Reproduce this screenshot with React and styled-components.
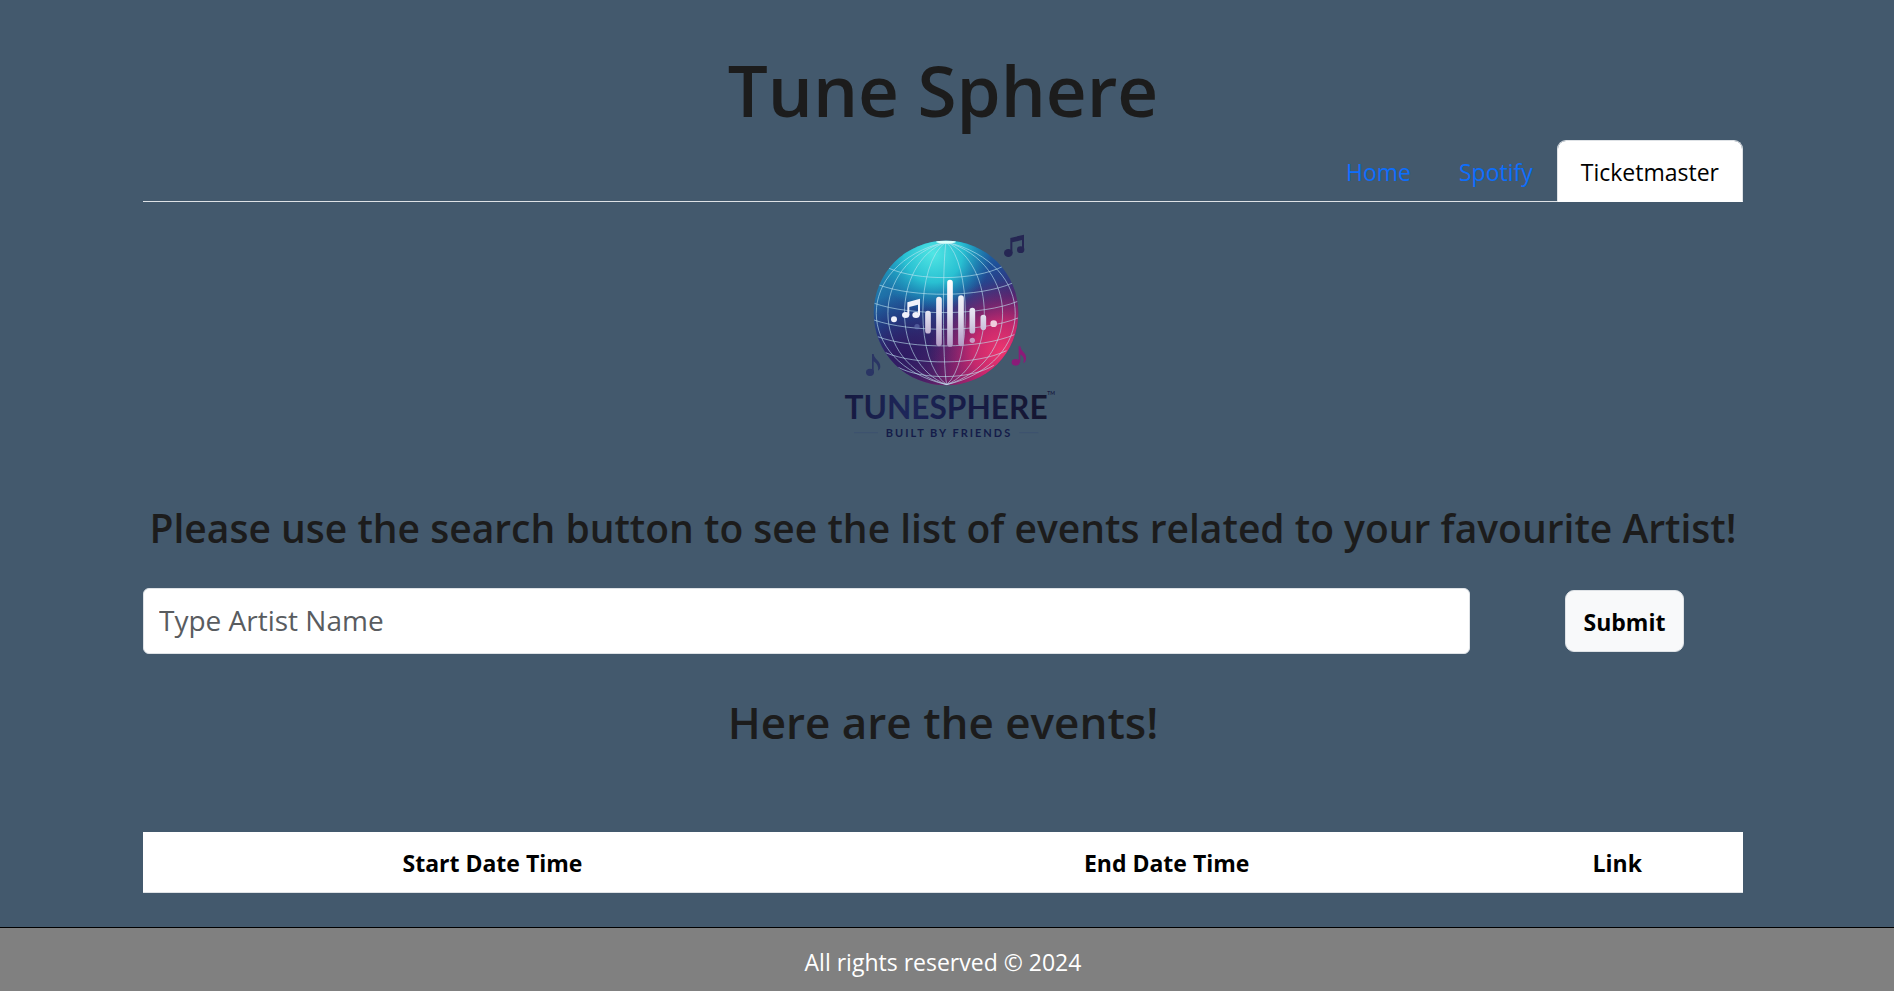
import React from "react";
import styled, { createGlobalStyle } from "styled-components";

const GlobalStyle = createGlobalStyle`
  *, *::before, *::after { box-sizing: border-box; }
  body {
    margin: 0;
    background: #43596d;
    color: #1c1c1c;
    font-family: "Open Sans", "Noto Sans", sans-serif;
    font-size: 23px;
    line-height: 36px;
  }
`;

const Page = styled.div`
  min-height: 100vh;
  display: flex;
  flex-direction: column;
`;

const Main = styled.main`
  flex: 1;
  width: calc(100% - 294px);
  margin-left: 143px;
  padding-top: 42px;
  display: flex;
  flex-direction: column;
`;

const Title = styled.h1`
  margin: 0 0 2px;
  font-size: 71px;
  font-weight: 600;
  line-height: 96px;
  text-align: center;
`;

const Tabs = styled.nav`
  display: flex;
  justify-content: flex-end;
  border-bottom: 1px solid #dee2e6;
`;

const Tab = styled.a`
  padding: 13px 23px 11px;
  margin-bottom: -1px;
  border: 1px solid ${(p) => (p.$active ? "#dee2e6" : "transparent")};
  border-bottom-color: ${(p) => (p.$active ? "#fff" : "transparent")};
  border-radius: 9px 9px 0 0;
  background: ${(p) => (p.$active ? "#fff" : "transparent")};
  background-clip: padding-box;
  color: ${(p) => (p.$active ? "#000" : "#0d6efd")};
  text-decoration: none;
`;

const LogoImage = styled.svg`
  width: 240px;
  height: 230px;
  margin-top: 18px;
  align-self: center;
`;

const Prompt = styled.h2`
  margin: 48px 0 0;
  font-size: 39px;
  font-weight: 600;
  line-height: 60px;
  text-align: center;
  white-space: nowrap;
`;

const SearchForm = styled.form`
  display: flex;
  align-items: center;
  margin-top: 30px;
`;

const ArtistInput = styled.input`
  flex: 1;
  min-width: 0;
  height: 66px;
  padding: 0 15px 2px;
  border: 1px solid #dee2e6;
  border-radius: 6px;
  background: #fff;
  color: #212529;
  font: inherit;
  font-size: 28px;
  &::placeholder { color: #595c5f; opacity: 1; }
`;

const SubmitButton = styled.button`
  height: 62px;
  width: 119px;
  margin: 0 59px 0 95px;
  padding: 2px 0 0;
  border: 1px solid #dee2e6;
  border-radius: 9px;
  background: #f8f9fa;
  color: #000;
  font: inherit;
  font-weight: 700;
`;

const EventsHeading = styled.h2`
  margin: 36px 0 0;
  font-size: 44px;
  font-weight: 600;
  line-height: 64px;
  text-align: center;
`;

const EventsTable = styled.table`
  width: 100%;
  margin-top: 78px;
  border-collapse: collapse;
  background: #fff;
  color: #000;
`;

const HeadCell = styled.th`
  padding: 13px 12px 11px;
  border-bottom: 1px solid #dee2e6;
  font-weight: 700;
`;

const Footer = styled.footer`
  padding: 16px 8px 11px 0;
  border-top: 1px solid #000;
  background: #808080;
  color: #fff;
  text-align: center;
`;

const MERIDIANS = [-210, -175, -125, -70, -8, 58, 115, 170, 208];
const PARALLELS = [145, 195, 250, 300, 350, 398, 442];
const BARS = [
  [294, 273, 340], [327, 231, 378], [360, 180, 380], [393, 226, 378],
  [427, 264, 340], [460, 285, 330],
];

function parallelPath(y) {
  const dy = y - 279;
  const half = Math.sqrt(217 * 217 - dy * dy);
  return `M${348 - half} ${y}C${348 - half * 0.5} ${y + 38} ${348 + half * 0.5} ${y + 38} ${348 + half} ${y - 6}`;
}

function Logo() {
  return (
    <LogoImage viewBox="-21 0 720 690" role="img" aria-label="TuneSphere logo">
      <defs>
        <linearGradient id="base" x1="0.2" y1="0" x2="0.75" y2="1">
          <stop offset="0" stopColor="#1f9fbe" />
          <stop offset="0.4" stopColor="#1f4f98" />
          <stop offset="0.6" stopColor="#3a2a72" />
          <stop offset="1" stopColor="#a01e69" />
        </linearGradient>
        <radialGradient id="teal" gradientUnits="userSpaceOnUse" cx="310" cy="100" r="175">
          <stop offset="0" stopColor="#50e6e4" />
          <stop offset="0.5" stopColor="#29c0d2" />
          <stop offset="1" stopColor="#1698c0" stopOpacity="0" />
        </radialGradient>
        <radialGradient id="pink" gradientUnits="userSpaceOnUse" cx="515" cy="395" r="215">
          <stop offset="0" stopColor="#ee356f" />
          <stop offset="0.4" stopColor="#cf296d" stopOpacity="0.9" />
          <stop offset="1" stopColor="#7d1c6b" stopOpacity="0" />
        </radialGradient>
        <radialGradient id="violet" gradientUnits="userSpaceOnUse" cx="220" cy="410" r="190">
          <stop offset="0" stopColor="#2f1a62" />
          <stop offset="1" stopColor="#281a5c" stopOpacity="0" />
        </radialGradient>
        <linearGradient id="bar" gradientUnits="userSpaceOnUse" x1="0" y1="180" x2="0" y2="380">
          <stop offset="0" stopColor="#fff" />
          <stop offset="0.5" stopColor="#e3e2f0" />
          <stop offset="1" stopColor="#b29ac4" />
        </linearGradient>
        <linearGradient id="word" x1="0" x2="1">
          <stop offset="0" stopColor="#15193f" />
          <stop offset="0.3" stopColor="#1d2659" />
          <stop offset="0.6" stopColor="#161b47" />
          <stop offset="1" stopColor="#15162f" />
        </linearGradient>
        <clipPath id="globe"><circle cx="348" cy="279" r="217" /></clipPath>
      </defs>

      <g clipPath="url(#globe)">
        <rect x="130" y="60" width="440" height="440" fill="url(#base)" />
        <rect x="130" y="60" width="440" height="440" fill="url(#violet)" />
        <rect x="130" y="60" width="440" height="440" fill="url(#teal)" />
        <rect x="130" y="60" width="440" height="440" fill="url(#pink)" />
        <g fill="none" stroke="#bfe6f2" strokeWidth="3" strokeOpacity="0.6">
          {MERIDIANS.map((dx) => (
            <path key={dx} d={`M348 66C${348 + dx * 1.33} 130 ${348 + dx * 1.33} 430 350 494`} />
          ))}
          {PARALLELS.map((y) => <path key={y} d={parallelPath(y)} />)}
        </g>
        <ellipse cx="348" cy="65" rx="30" ry="6" fill="#d9fffb" />
      </g>

      <g stroke="url(#bar)" strokeWidth="17" strokeLinecap="round">
        {BARS.map(([x, top, bottom]) => (
          <path key={x} d={`M${x} ${top + 8}L${x + 0.01} ${bottom - 8}`} />
        ))}
      </g>
      <g fill="#f1f1fa">
        <circle cx="192" cy="298" r="9" />
        <circle cx="491" cy="311" r="10" fill="#efcddd" />
        <circle cx="427" cy="361" r="8" fill="#c79bc4" />
        <circle cx="261" cy="320" r="8" fill="#7182bd" fillOpacity="0.5" />
        <ellipse cx="227" cy="285" rx="11" ry="9" />
        <ellipse cx="258" cy="285" rx="11" ry="9" />
        <path d="M232 247L270 236V286H264V254L238 261V286H232Z" />
      </g>

      <g fill="#252653">
        <ellipse cx="535" cy="99" rx="13" ry="12" />
        <ellipse cx="572" cy="89" rx="11" ry="10" />
        <path d="M541 54L582 44V90H576V60L547 67V99H541Z" />
      </g>
      <g fill="#2a3564">
        <ellipse cx="120" cy="457" rx="12" ry="11" />
        <path d="M126 402H131C133 419 152 422 151 441Q151 449 144 452Q148 435 131 424V457H126Z" />
      </g>
      <g fill="#8b1b78">
        <ellipse cx="557" cy="427" rx="12" ry="10" />
        <path d="M566 379H571C573 396 591 399 588 418Q587 427 580 430Q586 412 571 403V427H566Z" />
      </g>

      <text x="348" y="597" textAnchor="middle" fill="url(#word)" fontFamily="Lato, sans-serif" fontSize="95" fontWeight="700">
        TUNESPHERE
      </text>
      <text x="652" y="524" fill="#181b42" fontFamily="Lato, sans-serif" fontSize="15" fontWeight="700">TM</text>
      <text x="357" y="651" textAnchor="middle" fill="#141c49" fontFamily="Lato, sans-serif" fontSize="33" fontWeight="700" letterSpacing="6">
        BUILT BY FRIENDS
      </text>
      <path d="M72 638H144M568 638H625" stroke="#3a4d70" strokeWidth="2" />
    </LogoImage>
  );
}

const TABS = [
  { label: "Home" },
  { label: "Spotify" },
  { label: "Ticketmaster", active: true },
];

const COLUMNS = ["Start Date Time", "End Date Time", "Link"];

export default function App() {
  return (
    <Page>
      <GlobalStyle />
      <Main>
        <Title>Tune Sphere</Title>
        <Tabs>
          {TABS.map(({ label, active }) => (
            <Tab key={label} href={`#${label.toLowerCase()}`} $active={active} aria-current={active ? "page" : undefined}>
              {label}
            </Tab>
          ))}
        </Tabs>
        <Logo />
        <Prompt>Please use the search button to see the list of events related to your favourite Artist!</Prompt>
        <SearchForm onSubmit={(e) => e.preventDefault()}>
          <ArtistInput type="text" aria-label="Artist name" placeholder="Type Artist Name" />
          <SubmitButton type="submit">Submit</SubmitButton>
        </SearchForm>
        <EventsHeading>Here are the events!</EventsHeading>
        <EventsTable>
          <thead>
            <tr>
              {COLUMNS.map((name) => <HeadCell key={name} scope="col">{name}</HeadCell>)}
            </tr>
          </thead>
        </EventsTable>
      </Main>
      <Footer>All rights reserved © 2024</Footer>
    </Page>
  );
}
